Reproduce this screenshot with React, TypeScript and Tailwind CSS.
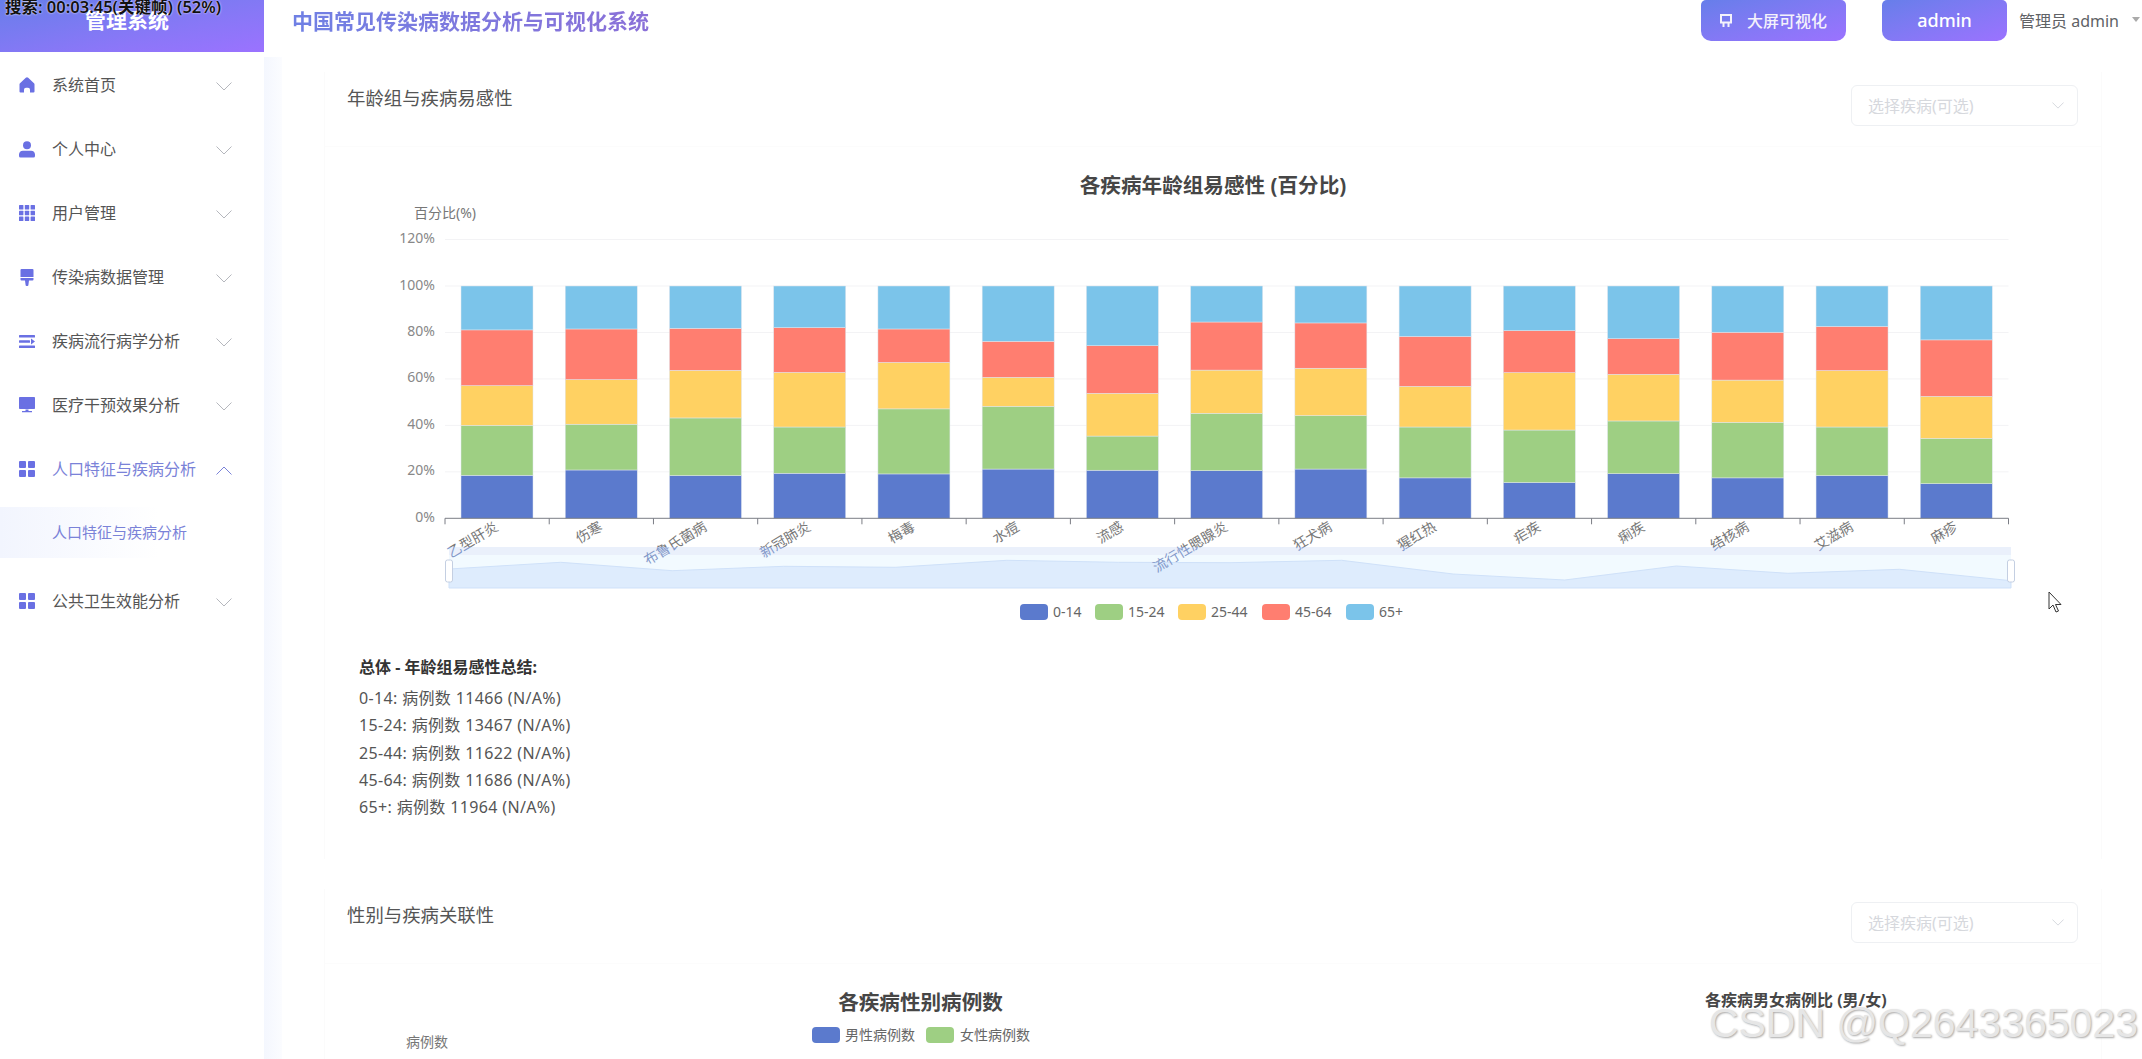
const menu = [
  { label: "系统首页", icon: "home" },
  { label: "个人中心", icon: "user" },
  { label: "用户管理", icon: "grid" },
  { label: "传染病数据管理", icon: "brush" },
  { label: "疾病流行病学分析", icon: "lines" },
  { label: "医疗干预效果分析", icon: "monitor" },
  { label: "人口特征与疾病分析", icon: "menu", open: true },
  { label: "公共卫生效能分析", icon: "menu" },
];

const colors = ["#5b7acd", "#9ecf83", "#ffd162", "#ff7e70", "#7bc4ea"];

const legend = [
  { name: "0-14", x: 1020 },
  { name: "15-24", x: 1095 },
  { name: "25-44", x: 1178 },
  { name: "45-64", x: 1262 },
  { name: "65+", x: 1346 },
];

// cumulative percent at the top of each age band, the last band always ends at 100
const diseases: { name: string; tops: number[] }[] = [
  { name: "乙型肝炎", tops: [18.5, 40.0, 57.1, 81.1] },
  { name: "伤寒", tops: [20.8, 40.5, 59.7, 81.5] },
  { name: "布鲁氏菌病", tops: [18.4, 43.2, 63.7, 81.8] },
  { name: "新冠肺炎", tops: [19.4, 39.3, 62.8, 82.1] },
  { name: "梅毒", tops: [19.1, 47.1, 67.1, 81.5] },
  { name: "水痘", tops: [21.2, 48.2, 60.7, 76.2] },
  { name: "流感", tops: [20.7, 35.4, 53.8, 74.3] },
  { name: "流行性腮腺炎", tops: [20.5, 45.2, 63.8, 84.5] },
  { name: "狂犬病", tops: [21.2, 44.2, 64.6, 84.1] },
  { name: "猩红热", tops: [17.4, 39.3, 56.8, 78.3] },
  { name: "疟疾", tops: [15.4, 38.0, 62.7, 80.8] },
  { name: "痢疾", tops: [19.2, 41.9, 62.0, 77.3] },
  { name: "结核病", tops: [17.4, 41.3, 59.5, 80.1] },
  { name: "艾滋病", tops: [18.4, 39.3, 63.6, 82.6] },
  { name: "麻疹", tops: [14.9, 34.4, 52.5, 76.8] },
];

const summary = [
  "0-14: 病例数 11466 (N/A%)",
  "15-24: 病例数 13467 (N/A%)",
  "25-44: 病例数 11622 (N/A%)",
  "45-64: 病例数 11686 (N/A%)",
  "65+: 病例数 11964 (N/A%)",
];

const zoomLine = [569, 562.3, 570.7, 566.3, 567.3, 560.3, 562.3, 562.7, 560.3, 574, 580, 566, 573.3, 569.3, 580.7];

const plotLeft = 445;
const plotRight = 2008.5;
const step = (plotRight - plotLeft) / 15;
const baseY = 518.3;
const yOf = (pct: number) => baseY - pct * 2.323;

const MenuIcon = ({ name }: { name: string }) => {
  if (name === "home")
    return (
      <svg viewBox="0 0 16 16" className="h-4 w-4 fill-[#6a70e3]">
        <path d="M6.8.8a1.8 1.8 0 0 1 2.4 0l5.8 5.4a1.5 1.5 0 0 1 .5 1.1v7.2a1 1 0 0 1-1 1H11v-2.7a2 2 0 0 0-2-2H7a2 2 0 0 0-2 2v2.7H1.5a1 1 0 0 1-1-1V7.3A1.5 1.5 0 0 1 1 6.2z" />
      </svg>
    );
  if (name === "user")
    return (
      <svg viewBox="0 0 16 17" className="h-[17px] w-4 fill-[#6a70e3]">
        <circle cx="8" cy="4.2" r="4" />
        <path d="M0 13.5A4 4 0 0 1 4 9.7h8a4 4 0 0 1 4 3.8V15a1.5 1.5 0 0 1-1.5 1.5h-13A1.5 1.5 0 0 1 0 15z" />
      </svg>
    );
  if (name === "grid")
    return (
      <svg viewBox="0 0 16 16" className="h-4 w-4 fill-[#6a70e3]">
        {[0, 5.8, 11.6].map((x) =>
          [0, 5.8, 11.6].map((y) => <rect key={`${x}-${y}`} x={x} y={y} width="4.4" height="4.4" rx="0.5" />),
        )}
      </svg>
    );
  if (name === "brush")
    return (
      <svg viewBox="0 0 16 17" className="h-[17px] w-4 fill-[#6a70e3]">
        <path d="M1.5 1a1 1 0 0 1 1-1h11a1 1 0 0 1 1 1v7h-13z" />
        <path d="M1.5 9h13v1.5a1 1 0 0 1-1 1H10l-.6 4.5a1 1 0 0 1-1 1h-.8a1 1 0 0 1-1-1L6 11.5H2.5a1 1 0 0 1-1-1z" />
      </svg>
    );
  if (name === "lines")
    return (
      <svg viewBox="0 0 16 13" className="h-[13px] w-4 fill-[#6a70e3]">
        <rect x="0" y="0" width="16" height="2.4" rx="0.5" />
        <rect x="0" y="5.3" width="11" height="2.4" rx="0.5" />
        <path d="M12 3.4 16 6.5l-4 3.1z" />
        <rect x="0" y="10.6" width="16" height="2.4" rx="0.5" />
      </svg>
    );
  if (name === "monitor")
    return (
      <svg viewBox="0 0 16 16" className="h-4 w-4 fill-[#6a70e3]">
        <rect x="0" y="0" width="16" height="12" rx="0.8" />
        <path d="M6.5 12.5h3v1.6H13v1.2H3v-1.2h3.5z" />
      </svg>
    );
  return (
    <svg viewBox="0 0 16 16" className="h-4 w-4 fill-[#6a70e3]">
      <rect x="0" y="0" width="7" height="7" rx="1" />
      <rect x="9" y="0" width="7" height="7" rx="1" />
      <rect x="0" y="9" width="7" height="7" rx="1" />
      <rect x="9" y="9" width="7" height="7" rx="1" />
    </svg>
  );
};

const Chevron = ({ up, className }: { up?: boolean; className: string }) => (
  <svg viewBox="0 0 16 9" fill="none" className={className}>
    <path d={up ? "M.5 8.5 8 1l7.5 7.5" : "M.5.5 8 8 15.5.5"} stroke="currentColor" />
  </svg>
);

const DiseaseSelect = () => (
  <div className="flex h-[41px] w-[227px] items-center justify-between rounded-md border border-[#eef0f3] bg-white pr-[13px] pl-[16px] text-[16px] text-[#d6d8dd]">
    <span>选择疾病(可选)</span>
    <Chevron className="h-[7px] w-[12px] text-[#c8ccd3]" />
  </div>
);

const CardHeader = ({ title }: { title: string }) => (
  <div className="flex h-[75px] items-start justify-between border-b border-[#fcfcfc] pt-[13px] pr-[23px] pl-[22px]">
    <span className="text-[18.4px] leading-[26px] text-[#555]">{title}</span>
    <DiseaseSelect />
  </div>
);

const AgeChart = () => (
  <svg viewBox="325 147 1776 490" className="block h-[490px] w-[1776px]" fontFamily="'Noto Sans','Noto Sans CJK SC',sans-serif">
    <defs>
      <clipPath id="above-zoom">
        <rect x="325" y="519" width="1776" height="28" />
      </clipPath>
      <clipPath id="over-zoom">
        <rect x="325" y="547" width="1776" height="60" />
      </clipPath>
    </defs>

    <text x="1213" y="193" textAnchor="middle" fontSize="20.6" fontWeight="700" fill="#464646">
      各疾病年龄组易感性 (百分比)
    </text>
    <text x="445" y="218" textAnchor="middle" fontSize="14" fill="#777">
      百分比(%)
    </text>

    {[120, 100, 80, 60, 40, 20, 0].map((p) => (
      <g key={p}>
        {p > 0 && <line x1={plotLeft} x2={plotRight} y1={yOf(p)} y2={yOf(p)} stroke="#f3f3f5" />}
        <text x="435" y={yOf(p) + 3.5} textAnchor="end" fontSize="14" fill="#888">
          {p}%
        </text>
      </g>
    ))}

    {diseases.map((d, i) => {
      const x = plotLeft + step * i + 16;
      const edges = [0, ...d.tops, 100];
      return (
        <g key={d.name}>
          {colors.map((c, k) => (
            <rect
              key={c}
              x={x}
              y={yOf(edges[k + 1])}
              width="72"
              height={yOf(edges[k]) - yOf(edges[k + 1])}
              fill={c}
              stroke="#dfe6ee"
              strokeWidth="0.5"
            />
          ))}
        </g>
      );
    })}

    <line x1={plotLeft} x2={plotRight} y1={baseY} y2={baseY} stroke="#7b7d85" />
    {Array.from({ length: 16 }, (_, i) => (
      <line key={i} x1={plotLeft + step * i} x2={plotLeft + step * i} y1={baseY} y2={baseY + 6} stroke="#7b7d85" />
    ))}

    {/* data zoom */}
    <rect x="449" y="547" width="1562" height="8" fill="#eaf0fb" />
    <rect x="449" y="555" width="1562" height="33" fill="#f2faff" />
    <path
      d={`M449 588 L${zoomLine.map((y, i) => `${449 + i * 111.57} ${y}`).join(" L")} L2011 588 Z`}
      fill="#deecfd"
      stroke="#cfe1f9"
    />
    <rect x="445.5" y="560" width="7" height="22" rx="2" fill="#fff" stroke="#c4cfe2" />
    <rect x="2007.5" y="560" width="7" height="22" rx="2" fill="#fff" stroke="#c4cfe2" />

    {/* axis names run down over the zoom bar, where they read blue */}
    {diseases.map((d, i) => {
      const cx = plotLeft + step * i + step / 2;
      const rotate = `rotate(-31 ${cx} 526)`;
      return (
        <g key={d.name} fontSize="14">
          <g clipPath="url(#above-zoom)">
            <text x={cx} y="530" textAnchor="end" fill="#777" transform={rotate}>
              {d.name}
            </text>
          </g>
          <g clipPath="url(#over-zoom)">
            <text x={cx} y="530" textAnchor="end" fill="#8298c9" transform={rotate} aria-hidden="true">
              {d.name}
            </text>
          </g>
        </g>
      );
    })}

    {legend.map((l, i) => (
      <g key={l.name}>
        <rect x={l.x} y="604" width="28" height="16" rx="4" fill={colors[i]} />
        <text x={l.x + 33} y="616.5" fontSize="14" fill="#666">
          {l.name}
        </text>
      </g>
    ))}
  </svg>
);

const GenderChart = () => (
  <svg viewBox="325 965 1776 110" className="block h-[110px] w-[1776px]" fontFamily="'Noto Sans','Noto Sans CJK SC',sans-serif">
    <text x="920.5" y="1011" textAnchor="middle" fontSize="20.6" fontWeight="700" fill="#464646">
      各疾病性别病例数
    </text>
    <rect x="812" y="1028" width="28" height="16" rx="4" fill={colors[0]} />
    <text x="845" y="1041" fontSize="14" fill="#666">
      男性病例数
    </text>
    <rect x="926" y="1028" width="28" height="16" rx="4" fill={colors[1]} />
    <text x="960" y="1041" fontSize="14" fill="#666">
      女性病例数
    </text>
    <text x="427" y="1048" textAnchor="middle" fontSize="14" fill="#777">
      病例数
    </text>
    <text x="1705" y="1007" fontSize="16" fontWeight="700" fill="#464646">
      各疾病男女病例比 (男/女)
    </text>
  </svg>
);

const App = () => {
  return (
    <div className="relative h-screen w-full overflow-hidden bg-white font-['Noto_Sans','Noto_Sans_CJK_SC',sans-serif]">
      {/* Top bar */}
      <header className="flex h-[52px]">
        <div className="flex w-[264px] items-center justify-center bg-linear-to-br from-[#667eea] to-[#9b72ff] pr-[10px] pb-[10px] text-[21px] font-bold text-white">
          管理系统
        </div>
        <div className="flex flex-1 items-start justify-between">
          <h1 className="mt-[5px] ml-[28px] bg-linear-to-r from-[#6f80e4] to-[#8a70d8] bg-clip-text text-[21px] leading-[32px] font-bold text-transparent">
            中国常见传染病数据分析与可视化系统
          </h1>
          <div className="flex items-start">
            <button className="flex h-[41px] w-[145px] items-center justify-center gap-[15px] rounded-t-[5px] rounded-b-[10px] bg-linear-to-br from-[#667eea] to-[#9b72ff] text-[16px] font-medium text-[#f4f2fb]">
              <svg viewBox="0 0 12 13" fill="none" stroke="currentColor" strokeWidth="2" className="h-[13px] w-[12px]">
                <path d="M1 8.5V1h10v7.500zM3.500 8.500V13M8.500 8.500V13" />
              </svg>
              大屏可视化
            </button>
            <button className="ml-[36px] flex h-[41px] w-[125px] items-center justify-center rounded-t-[5px] rounded-b-[10px] bg-linear-to-br from-[#667eea] to-[#9b72ff] text-[18px] font-medium text-white">
              admin
            </button>
            <div className="mt-[9px] ml-[12px] flex w-[123px] items-center text-[16px] leading-[24px] whitespace-nowrap text-[#606266]">
              管理员 admin
              <span className="mt-[-4px] ml-[13px] h-0 w-0 shrink-0 border-x-[4px] border-t-[5px] border-x-transparent border-t-[#aaa]" />
            </div>
          </div>
        </div>
      </header>

      <div className="flex">
        {/* Sidebar */}
        <aside className="w-[264px] pt-px">
          {menu.map((item) => (
            <div key={item.label}>
              <div className="flex h-[64px] items-center pr-[32px] pl-[19px]">
                <span className="flex w-[33px] shrink-0">
                  <MenuIcon name={item.icon} />
                </span>
                <span className={`flex-1 text-[16px] ${item.open ? "text-[#7a82d8]" : "text-[#555]"}`}>{item.label}</span>
                <Chevron up={item.open} className={`mt-[3px] h-[9px] w-[16px] ${item.open ? "text-[#7a82d8]" : "text-[#b5b7bd]"}`} />
              </div>
              {item.open && (
                <div className="h-[68px] pt-[6px]">
                  <div className="flex h-[51px] items-center bg-linear-to-r from-[#f2f5fe] to-white to-60% pl-[52px] text-[15px] text-[#7a82d8]">
                    人口特征与疾病分析
                  </div>
                </div>
              )}
            </div>
          ))}
        </aside>

        {/* Main */}
        <main className="flex flex-1">
          <div className="mt-[5px] h-[1002px] w-[18px] bg-linear-to-r from-[#f4f7fe] to-[#fbfcff]" />
          <div className="w-[1820px] pt-[20px] pl-[42px]">
            <section className="w-[1778px] border-x border-[#fbfbfb]">
              <CardHeader title="年龄组与疾病易感性" />
              <AgeChart />
              <div className="pt-[19px] pb-[38px] pl-[34px]">
                <p className="mb-[7px] text-[16px] leading-[22px] font-bold text-[#333]">总体 - 年龄组易感性总结:</p>
                {summary.map((line) => (
                  <p key={line} className="text-[16px] leading-[27.3px] tracking-[0.35px] text-[#555]">
                    {line}
                  </p>
                ))}
              </div>
            </section>
            <section className="mt-[30px] w-[1778px] border-x border-[#fbfbfb]">
              <CardHeader title="性别与疾病关联性" />
              <GenderChart />
            </section>
          </div>
        </main>
      </div>

      {/* Video overlays */}
      <div className="absolute top-[-3px] left-[5px] text-[16.500px] leading-[20px] font-semibold whitespace-pre text-[#111] [text-shadow:0_0_2px_#fff]">
        搜索: 00:03:45(关键帧) (52%)
      </div>
      <svg viewBox="0 0 14 22" className="absolute top-[591px] left-[2048px] h-[22px] w-[14px]">
        <path d="M1 1v17l4-4 3 7 2.500-1-3-6.500H13z" fill="#fff" stroke="#333" strokeWidth="1" />
      </svg>
      <div className="absolute top-[999px] right-[4px] font-['Liberation_Sans',sans-serif] text-[41px] leading-[48px] text-[#e6e6e6] [text-shadow:1px_1px_2px_#aaa]">
        CSDN @Q2643365023
      </div>
    </div>
  );
};

export default App;
